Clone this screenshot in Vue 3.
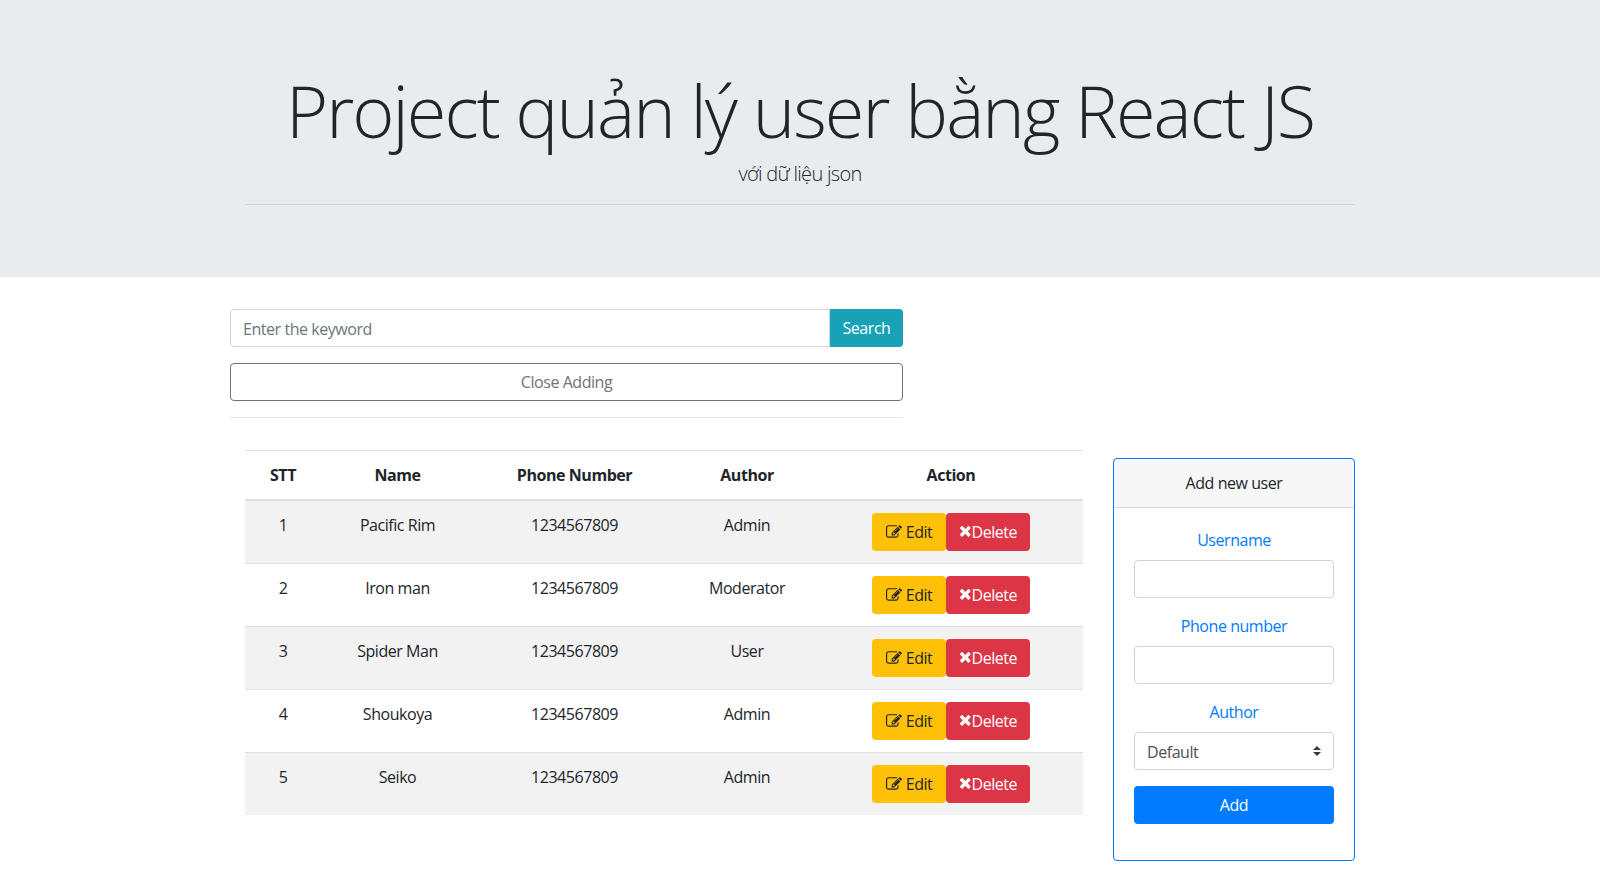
<script setup>
const users = [
  { id: 1, name: 'Pacific Rim', phone: '1234567809', role: 'Admin' },
  { id: 2, name: 'Iron man', phone: '1234567809', role: 'Moderator' },
  { id: 3, name: 'Spider Man', phone: '1234567809', role: 'User' },
  { id: 4, name: 'Shoukoya', phone: '1234567809', role: 'Admin' },
  { id: 5, name: 'Seiko', phone: '1234567809', role: 'Admin' },
]
</script>

<template>
  <div class="page">
    <header class="jumbotron">
      <h1 class="title">Project quản lý user bằng React JS</h1>
      <p class="lead">với dữ liệu json</p>
      <hr class="jumbo-rule" />
    </header>

    <main class="container">
      <section class="tools">
        <div class="search">
          <input class="control search-input" type="text" placeholder="Enter the keyword" />
          <button class="btn btn-info search-btn" type="button">Search</button>
        </div>
        <button class="btn btn-outline close-btn" type="button">Close Adding</button>
        <hr class="tools-rule" />
      </section>

      <div class="content">
        <table class="users">
          <colgroup>
            <col class="c1" /><col class="c2" /><col class="c3" /><col class="c4" /><col class="c5" />
          </colgroup>
          <thead>
            <tr>
              <th>STT</th>
              <th>Name</th>
              <th>Phone Number</th>
              <th>Author</th>
              <th>Action</th>
            </tr>
          </thead>
          <tbody>
            <tr v-for="u in users" :key="u.id">
              <td>{{ u.id }}</td>
              <td>{{ u.name }}</td>
              <td>{{ u.phone }}</td>
              <td>{{ u.role }}</td>
              <td class="actions">
                <div class="action-group">
                  <button class="btn btn-warning" type="button">
                    <svg class="icon-edit" viewBox="0 0 1792 1792" aria-hidden="true"><path fill="currentColor" d="M888 1184l116-116-152-152-116 116v56h96v96h56zm440-720q-16-16-33 1l-350 350q-17 17-1 33t33-1l350-350q17-17 1-33zm80 594v190q0 119-84.5 203.5t-203.5 84.5h-832q-119 0-203.5-84.5t-84.5-203.5v-832q0-119 84.5-203.5t203.5-84.5h832q63 0 117 25 15 7 18 23 3 17-9 29l-49 49q-14 14-32 8-23-6-45-6h-832q-66 0-113 47t-47 113v832q0 66 47 113t113 47h832q66 0 113-47t47-113v-126q0-13 9-22l64-64q15-15 35-9t20 29zm-96-738l288 288-672 672h-288v-288zm444 132l-92 92-288-288 92-92q28-28 68-28t68 28l152 152q28 28 28 68t-28 68z"/></svg>
                    <span>Edit</span>
                  </button>
                  <button class="btn btn-danger" type="button">
                    <svg class="icon-x" viewBox="0 0 1408 1792" aria-hidden="true"><path fill="currentColor" d="M1298 1184q0 40-28 68l-136 136q-28 28-68 28t-68-28l-294-294-294 294q-28 28-68 28t-68-28l-136-136q-28-28-28-68t28-68l294-294-294-294q-28-28-28-68t28-68l136-136q28-28 68-28t68 28l294 294 294-294q28-28 68-28t68 28l136 136q28 28 28 68t-28 68l-294 294 294 294q28 28 28 68z"/></svg>
                    <span>Delete</span>
                  </button>
                </div>
              </td>
            </tr>
          </tbody>
        </table>

        <aside class="card">
          <div class="card-header">Add new user</div>
          <form class="card-body" @submit.prevent>
            <div class="field">
              <label>Username</label>
              <input class="control" type="text" />
            </div>
            <div class="field">
              <label>Phone number</label>
              <input class="control" type="text" />
            </div>
            <div class="field">
              <label>Author</label>
              <select class="control select">
                <option>Default</option>
              </select>
            </div>
            <button class="btn btn-primary" type="submit">Add</button>
          </form>
        </aside>
      </div>
    </main>
  </div>
</template>

<style>
html, body { margin: 0; }
</style>

<style scoped>
.page {
  font-family: "Open Sans", "Noto Sans", sans-serif;
  font-size: 16px;
  line-height: 24px;
  color: #212529;
  letter-spacing: -0.45px;
}
.jumbotron {
  background: #e9ecef;
  height: 277px;
  box-sizing: border-box;
  padding-top: 67px;
  text-align: center;
}
.title {
  margin: 0 0 6px;
  font-size: 72px;
  font-weight: 300;
  line-height: 86.4px;
  letter-spacing: -1.95px;
}
.lead {
  margin: 0;
  font-size: 20px;
  font-weight: 300;
  line-height: 30px;
  letter-spacing: -0.7px;
}
.jumbo-rule {
  width: 1110px;
  margin: 15px auto 0;
  border: 0;
  border-top: 1px solid rgba(0, 0, 0, 0.1);
}
.container {
  width: 1140px;
  margin: 0 auto;
  padding-top: 32px;
}
.tools { width: 673px; }
.search { display: flex; }
.control {
  display: block;
  width: 100%;
  height: 38px;
  box-sizing: border-box;
  padding: 7px 12px 5px;
  font: inherit;
  letter-spacing: inherit;
  color: #495057;
  background: #fff;
  border: 1px solid #ced4da;
  border-radius: 4px;
  outline: none;
}
.control::placeholder { color: #6c757d; opacity: 1; }
.search-input {
  flex: 1;
  min-width: 0;
  border-radius: 4px 0 0 4px;
}
.btn {
  display: inline-flex;
  align-items: center;
  justify-content: center;
  height: 38px;
  box-sizing: border-box;
  padding: 6px 12px;
  font: inherit;
  letter-spacing: inherit;
  border: 1px solid transparent;
  border-radius: 4px;
  white-space: nowrap;
}
.btn-info {
  background: #17a2b8;
  color: #fff;
}
.search-btn {
  width: 73px;
  padding: 0;
  border-radius: 0 4px 4px 0;
}
.btn-outline {
  background: #fff;
  color: #6c757d;
  border-color: #6c757d;
}
.close-btn {
  display: flex;
  width: 100%;
  margin-top: 16px;
}
.tools-rule {
  margin: 16px 0 32px;
  border: 0;
  border-top: 1px solid rgba(0, 0, 0, 0.1);
}
.content {
  display: flex;
  align-items: flex-start;
  gap: 30px;
  padding: 0 15px;
}
.users {
  width: 838px;
  table-layout: fixed;
  border-collapse: collapse;
  flex: none;
}
.c1 { width: 76px; }
.c2 { width: 153px; }
.c3 { width: 201px; }
.c4 { width: 144px; }
.c5 { width: 264px; }
.users th,
.users td {
  padding: 12px;
  text-align: center;
  vertical-align: top;
  border-top: 1px solid #dee2e6;
}
.users th { font-weight: 700; border-bottom: 2px solid #dee2e6; }
.users tbody tr:nth-child(odd) { background: rgba(0, 0, 0, 0.05); }
.action-group { display: flex; justify-content: center; }
.btn-warning {
  width: 74px;
  padding: 0;
  background: #ffc107;
  color: #212529;
  gap: 4px;
}
.btn-danger {
  width: 84px;
  padding: 0;
  background: #dc3545;
  color: #fff;
}
.icon-edit { width: 16px; height: 16px; }
.icon-x { width: 12.57px; height: 16px; }
.card {
  width: 242px;
  margin-top: 8px;
  box-sizing: border-box;
  border: 1px solid #007bff;
  border-radius: 4px;
  flex: none;
  overflow: hidden;
}
.card-header {
  padding: 12px 20px;
  background: rgba(0, 0, 0, 0.03);
  border-bottom: 1px solid rgba(0, 0, 0, 0.125);
  text-align: center;
}
.card-body {
  padding: 20px 20px 36px;
}
.field { margin-bottom: 16px; text-align: center; }
.field label {
  display: block;
  margin-bottom: 8px;
  color: #007bff;
}
.select {
  appearance: none;
  padding-right: 28px;
  background: #fff url("data:image/svg+xml,%3csvg xmlns='http://www.w3.org/2000/svg' viewBox='0 0 4 5'%3e%3cpath fill='%23343a40' d='M2 0L0 2h4zm0 5L0 3h4z'/%3e%3c/svg%3e") no-repeat right 12px center / 8px 10px;
}
.btn-primary {
  display: flex;
  width: 100%;
  background: #007bff;
  color: #fff;
}
</style>
